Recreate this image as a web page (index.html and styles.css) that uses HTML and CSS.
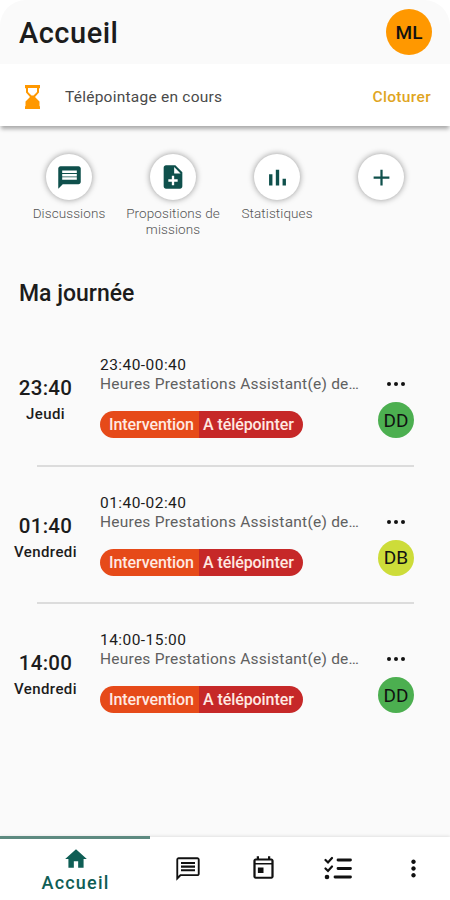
FILE: index.html
```html
<!DOCTYPE html>
<html lang="fr">

<head>
    <meta charset="UTF-8">
    <meta name="viewport" content="width=device-width, initial-scale=1.0">
    <title>Accueil</title>
    <link rel="stylesheet" href="styles.css">
</head>

<body>
    <div class="app">
        <header class="header">
            <h1 class="title">Accueil</h1>
            <div class="avatar avatar-user">ML</div>
        </header>

        <div class="banner">
            <svg class="banner-icon" viewBox="0 0 15 24">
                <path fill="#ff9800" d="M0 0h15v3l-1 .5v4L10 12l4.500 4.500V21l.5.500V24H0v-2.500l.5-.500v-4.500L5 12 1 7.500v-4L0 3zM3 3v4l3.500 3.500h2L12 7V3z" />
            </svg>
            <span class="banner-text">Télépointage en cours</span>
            <a class="banner-action">Cloturer</a>
        </div>

        <nav class="shortcuts">
            <div class="shortcut">
                <div class="shortcut-btn">
                    <svg width="27" height="27" viewBox="0 0 24 24"><path d="M20 2H4c-1.100 0-1.990.9-1.990 2L2 22l4-4h14c1.100 0 2-.9 2-2V4c0-1.100-.9-2-2-2zM5.500 14v-2.200h13V14zm0-3V8.800h13V11zm0-3V5.800h13V8z" /></svg>
                </div>
                <span class="shortcut-label">Discussions</span>
            </div>
            <div class="shortcut">
                <div class="shortcut-btn">
                    <svg width="28" height="28" viewBox="0 0 24 24"><path d="M14 2H6c-1.100 0-2 .9-2 2v16c0 1.100.9 2 2 2h12c1.100 0 2-.9 2-2V8zm2 14h-3v3h-2v-3H8v-2h3v-3h2v3h3zm-3-7V3.500L18.500 9z" /></svg>
                </div>
                <span class="shortcut-label">Propositions de missions</span>
            </div>
            <div class="shortcut">
                <div class="shortcut-btn">
                    <svg width="27" height="27" viewBox="0 0 24 24"><path d="M4.500 9.200h3V19h-3zM10.500 5h3v14h-3zm6 8h3v6h-3z" /></svg>
                </div>
                <span class="shortcut-label">Statistiques</span>
            </div>
            <div class="shortcut">
                <div class="shortcut-btn">
                    <svg width="27" height="27" viewBox="0 0 24 24"><path d="M19 13h-6v6h-2v-6H5v-2h6V5h2v6h6z" /></svg>
                </div>
            </div>
        </nav>

        <h2 class="section-title">Ma journée</h2>

        <main class="day">
            <div class="row">
                <div class="when">
                    <div class="hour">23:40</div>
                    <div class="weekday">Jeudi</div>
                </div>
                <div class="info">
                    <div class="range">23:40-00:40</div>
                    <div class="desc">Heures Prestations Assistant(e) de…</div>
                    <div class="tags"><span class="tag tag-type">Intervention</span><span class="tag tag-state">A télépointer</span></div>
                </div>
                <div class="side">
                    <div class="more"><i></i><i></i><i></i></div>
                    <div class="avatar avatar-green">DD</div>
                </div>
            </div>

            <div class="row">
                <div class="when">
                    <div class="hour">01:40</div>
                    <div class="weekday">Vendredi</div>
                </div>
                <div class="info">
                    <div class="range">01:40-02:40</div>
                    <div class="desc">Heures Prestations Assistant(e) de…</div>
                    <div class="tags"><span class="tag tag-type">Intervention</span><span class="tag tag-state">A télépointer</span></div>
                </div>
                <div class="side">
                    <div class="more"><i></i><i></i><i></i></div>
                    <div class="avatar avatar-lime">DB</div>
                </div>
            </div>

            <div class="row">
                <div class="when">
                    <div class="hour">14:00</div>
                    <div class="weekday">Vendredi</div>
                </div>
                <div class="info">
                    <div class="range">14:00-15:00</div>
                    <div class="desc">Heures Prestations Assistant(e) de…</div>
                    <div class="tags"><span class="tag tag-type">Intervention</span><span class="tag tag-state">A télépointer</span></div>
                </div>
                <div class="side">
                    <div class="more"><i></i><i></i><i></i></div>
                    <div class="avatar avatar-green">DD</div>
                </div>
            </div>
        </main>

        <footer class="tabbar">
            <div class="tab tab-active">
                <svg width="26" height="26" viewBox="0 0 24 24"><path d="M10 20v-6h4v6h5v-8h3L12 3 2 12h3v8z" /></svg>
                <span>Accueil</span>
            </div>
            <div class="tab">
                <svg width="28" height="28" viewBox="0 0 24 24"><path d="M4 3.600h16.400v12.800H5.200L3.600 18V3.600zM4 2c-1.100 0-1.990.9-1.990 2L2 22l4-4h14c1.100 0 2-.9 2-2V4c0-1.100-.9-2-2-2zM6 12.200h12V14H6zm0-3.100h12v1.800H6zM6 6h12v1.800H6z" /></svg>
            </div>
            <div class="tab">
                <svg width="27" height="27" viewBox="0 0 24 24"><path d="M19 3h-1V1h-2v2H8V1H6v2H5c-1.100 0-2 .9-2 2v14c0 1.100.9 2 2 2h14c1.100 0 2-.9 2-2V5c0-1.100-.9-2-2-2zm0 1.800V7H5V4.800zm0 14.600H5V8.500h14zM7 11h5v5H7z" /></svg>
            </div>
            <div class="tab">
                <svg width="28" height="26" viewBox="0 0 28 26" fill="none" stroke="#111" stroke-width="2.800" stroke-linecap="round">
                    <path d="M14 4h12.500M14 12.500h12.500M11 21h15.500" />
                    <path stroke-width="2.200" d="M1.500 4L4 6.500 8 2M1.500 12.500L4 15l4-4.500" />
                    <circle cx="3" cy="21" r="2.300" fill="#111" stroke="none" />
                </svg>
            </div>
            <div class="tab">
                <svg width="27" height="27" viewBox="0 0 24 24"><path d="M12 8c1.100 0 2-.9 2-2s-.9-2-2-2-2 .9-2 2 .9 2 2 2zm0 2c-1.100 0-2 .9-2 2s.9 2 2 2 2-.9 2-2-.9-2-2-2zm0 6c-1.100 0-2 .9-2 2s.9 2 2 2 2-.9 2-2-.9-2-2-2z" /></svg>
            </div>
        </footer>
    </div>
</body>

</html>
```
FILE: styles.css
```css
* {
    margin: 0;
    padding: 0;
    box-sizing: border-box;
}

body {
    background: #fff;
    font-family: Roboto, sans-serif;
    color: #1c1c1c;
}

.app {
    width: 450px;
    height: 900px;
    display: flex;
    flex-direction: column;
    background: #fafafa;
    border-radius: 26px 26px 0 0;
    overflow: hidden;
}

.header {
    height: 64px;
    flex: none;
    display: flex;
    align-items: center;
    justify-content: space-between;
    padding: 0 18px 0 19px;
}

.title {
    font-size: 29px;
    font-weight: 500;
    letter-spacing: 0.5px;
    padding-top: 2px;
}

.avatar {
    width: 36px;
    height: 36px;
    margin-top: -1px;
    border-radius: 50%;
    display: flex;
    align-items: center;
    justify-content: center;
    font-size: 19px;
    font-weight: 400;
    color: #111;
}

.avatar-user {
    width: 46px;
    height: 46px;
    margin-top: 0;
    background: #ff9800;
    font-size: 19px;
    font-weight: 500;
}

.avatar-green {
    background: #4caf50;
}

.avatar-lime {
    background: #cddc39;
}

.banner {
    height: 62px;
    flex: none;
    display: flex;
    align-items: center;
    padding: 4px 19px 0 25px;
    background: #fff;
    box-shadow: 0 4px 4px -1px rgba(0, 0, 0, 0.32);
}

.banner-icon {
    width: 15px;
    height: 24px;
    margin-right: 25px;
}

.banner-text {
    flex: 1;
    font-size: 15.5px;
    letter-spacing: 0.24px;
    color: #4a4a4a;
}

.banner-action {
    font-size: 15.5px;
    font-weight: 500;
    letter-spacing: 0.35px;
    color: #dfa51f;
}

.shortcuts {
    display: flex;
    padding: 28px 17px 0;
    height: 153px;
    flex: none;
}

.shortcut {
    width: 104px;
    flex: none;
    display: flex;
    flex-direction: column;
    align-items: center;
}

.shortcut-btn {
    width: 46px;
    height: 46px;
    border-radius: 50%;
    background: #fff;
    box-shadow: 0 0 6px rgba(0, 0, 0, 0.4);
    display: flex;
    align-items: center;
    justify-content: center;
    fill: #0f504c;
}

.shortcut-label {
    margin-top: 5px;
    font-size: 13.5px;
    font-weight: 300;
    line-height: 16px;
    letter-spacing: 0.1px;
    text-align: center;
    color: #555;
}

.section-title {
    padding-left: 19px;
    font-size: 23px;
    font-weight: 500;
    line-height: 30px;
}

.day {
    flex: 1;
    padding-top: 20px;
}

.row {
    height: 137.5px;
    display: flex;
    position: relative;
}

.row:not(:last-child)::after {
    content: "";
    position: absolute;
    left: 37px;
    right: 36px;
    bottom: 0;
    height: 2px;
    background: #dcdcdc;
}

.when {
    width: 91px;
    padding-top: 46px;
    text-align: center;
}

.hour {
    font-size: 20.5px;
    font-weight: 500;
    line-height: 26px;
    letter-spacing: 0.3px;
}

.weekday {
    font-size: 15px;
    font-weight: 500;
    line-height: 26px;
    letter-spacing: 0.4px;
}

.info {
    width: 260px;
    margin-left: 9px;
    padding-top: 27px;
}

.range {
    font-size: 15.5px;
    line-height: 19px;
    letter-spacing: 0.45px;
}

.desc {
    font-size: 15.5px;
    line-height: 18px;
    color: #606060;
    letter-spacing: 0.24px;
    white-space: nowrap;
}

.tags {
    display: flex;
    width: 203px;
    height: 27px;
    margin-top: 18px;
    border-radius: 14px;
    overflow: hidden;
}

.tag {
    font-size: 16px;
    font-weight: 500;
    line-height: 27px;
    letter-spacing: -0.08px;
    color: #ffe9e2;
    white-space: nowrap;
}

.tag-type {
    width: 99px;
    padding-left: 9px;
    background: #e64a19;
}

.tag-state {
    flex: 1;
    padding-left: 4px;
    background: #c62828;
}

.side {
    width: 36px;
    margin-left: 18px;
    padding-top: 53px;
}

.more {
    display: flex;
    justify-content: center;
    gap: 3px;
    margin-bottom: 17px;
}

.more i {
    width: 4px;
    height: 4px;
    border-radius: 50%;
    background: #111;
}

.tabbar {
    height: 63px;
    flex: none;
    display: grid;
    grid-template-columns: 150px 75px 75px 75px 75px;
    background: #fff;
    box-shadow: 0 -1px 3px rgba(0, 0, 0, 0.1);
}

.tab {
    display: flex;
    align-items: center;
    justify-content: center;
    padding-left: 1px;
    fill: #111;
}

.tab-active {
    flex-direction: column;
    border-top: 3px solid #5d8a80;
    margin-top: -1px;
    fill: #0f5e55;
    color: #0f5e55;
    font-size: 18px;
    font-weight: 500;
    line-height: 22px;
    letter-spacing: 1.2px;
}
```
